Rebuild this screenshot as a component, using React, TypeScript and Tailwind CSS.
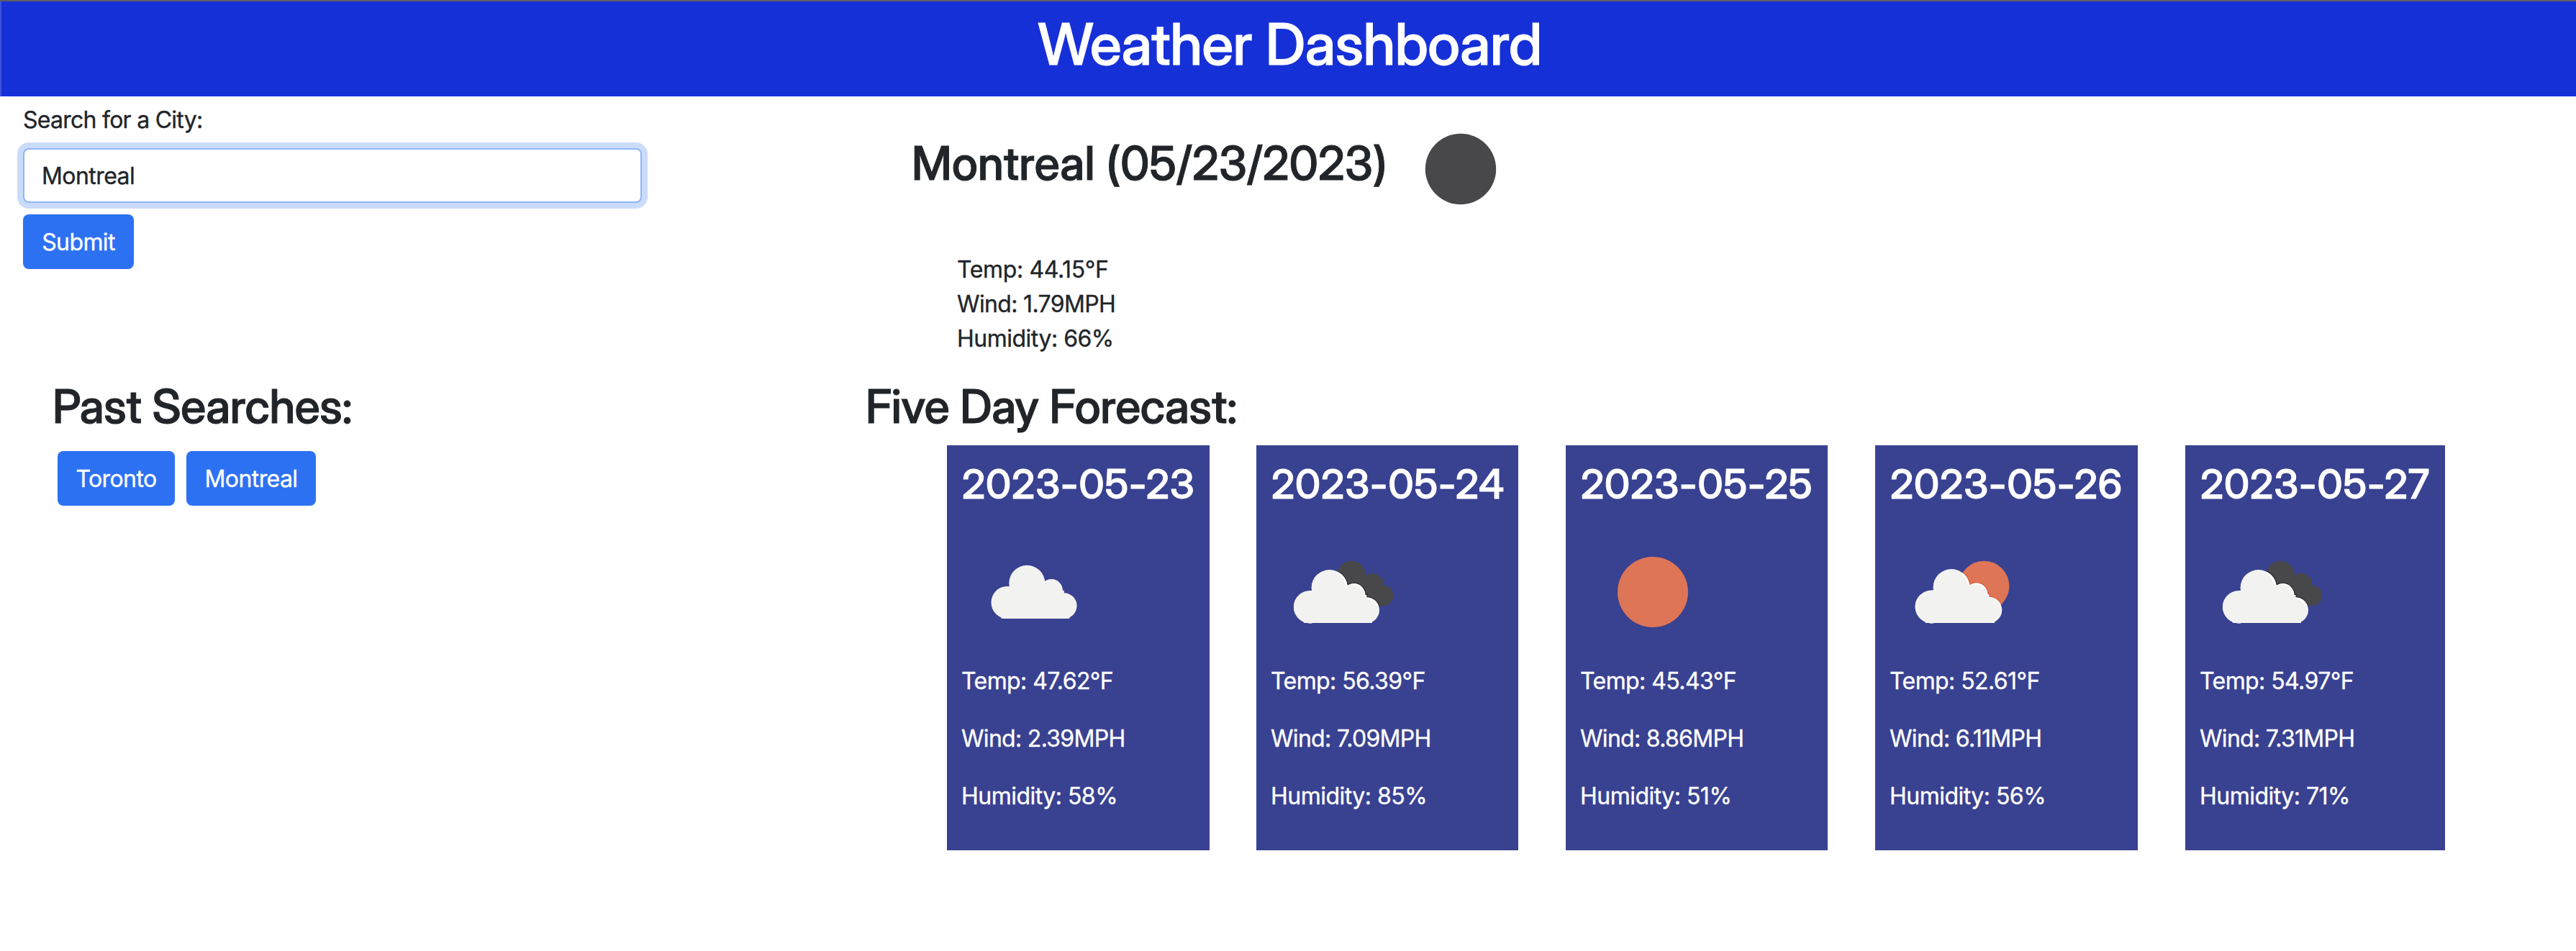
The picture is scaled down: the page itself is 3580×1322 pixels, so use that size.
type IconKind = "night" | "sun" | "cloud" | "clouds" | "partly";

const CLOUD = (
  <>
    <circle cx="54.5" cy="120.7" r="22.6" />
    <circle cx="81.7" cy="94" r="25" />
    <circle cx="115.6" cy="104" r="15.7" />
    <circle cx="133.2" cy="125.3" r="17.8" />
    <rect x="54.5" y="104" width="78.7" height="39" />
    <rect x="46" y="138" width="95" height="5" />
  </>
);

const DARK_CLOUD = (
  <>
    <circle cx="112.3" cy="76.8" r="20" />
    <circle cx="141.4" cy="86.3" r="12.6" />
    <circle cx="155.8" cy="104.8" r="14.5" />
    <rect x="100" y="80" width="55.8" height="39.3" />
  </>
);

function WeatherIcon({ kind, id }: { kind: IconKind; id: string }) {
  return (
    <svg viewBox="0 0 200 200" className="block h-[200px] w-[200px] shrink-0">
      {kind === "night" && <circle cx="100" cy="100" r="49.2" fill="#48484a" />}
      {kind === "sun" && <circle cx="101" cy="100" r="49" fill="#dd7556" />}
      {kind === "cloud" && (
        <g fill="#f2f2f0" transform="translate(9.6 -6.2)">
          {CLOUD}
        </g>
      )}
      {kind === "clouds" && (
        <>
          <defs>
            <clipPath id={`${id}-back`}>{DARK_CLOUD}</clipPath>
            <clipPath id={`${id}-front`}>{CLOUD}</clipPath>
          </defs>
          <g fill="#48484a">{DARK_CLOUD}</g>
          <g clipPath={`url(#${id}-back)`}>
            <g fill="#303032" stroke="#303032" strokeWidth="3">
              {CLOUD}
            </g>
          </g>
          <g fill="#f2f2f0">{CLOUD}</g>
          <g clipPath={`url(#${id}-front)`}>
            <g fill="#ffffff">{DARK_CLOUD}</g>
            <g fill="#f2f2f0" transform="translate(-2 1.6)">
              {CLOUD}
            </g>
          </g>
        </>
      )}
      {kind === "partly" && (
        <>
          <defs>
            <clipPath id={`${id}-back`}>
              <circle cx="131.3" cy="91.7" r="35" />
            </clipPath>
            <clipPath id={`${id}-front`}>{CLOUD}</clipPath>
          </defs>
          <circle cx="131.3" cy="91.7" r="35" fill="#dd7556" />
          <g clipPath={`url(#${id}-back)`}>
            <g
              fill="#dd6440"
              stroke="#dd6440"
              strokeWidth="3"
              transform="translate(3.3 -1.9) scale(1.013)"
            >
              {CLOUD}
            </g>
          </g>
          <g transform="translate(3.3 -1.9) scale(1.013)">
            <g fill="#f2f2f0">{CLOUD}</g>
            <g clipPath={`url(#${id}-front)`}>
              <circle cx="126.4" cy="92.4" r="34.6" fill="#f8fdff" />
              <g fill="#f2f2f0" transform="translate(-2 1.6)">
                {CLOUD}
              </g>
            </g>
          </g>
        </>
      )}
    </svg>
  );
}

const FORECAST: {
  date: string;
  icon: IconKind;
  temp: string;
  wind: string;
  humidity: string;
  size: string;
}[] = [
  { date: "2023-05-23", icon: "cloud", temp: "47.62", wind: "2.39", humidity: "58", size: "w-[365px] mr-[65px]" },
  { date: "2023-05-24", icon: "clouds", temp: "56.39", wind: "7.09", humidity: "85", size: "w-[364px] mr-[66px]" },
  { date: "2023-05-25", icon: "sun", temp: "45.43", wind: "8.86", humidity: "51", size: "w-[364px] mr-[66px]" },
  { date: "2023-05-26", icon: "partly", temp: "52.61", wind: "6.11", humidity: "56", size: "w-[365px] mr-[66px]" },
  { date: "2023-05-27", icon: "clouds", temp: "54.97", wind: "7.31", humidity: "71", size: "w-[361px]" },
];

const BUTTON =
  "flex h-[76px] items-center justify-center rounded-[8px] bg-[#2d71f3] pt-0.5 leading-[48px] text-white tracking-[-0.6px]";

const DISPLAY = "font-['Inter_Display','Inter',sans-serif] font-medium whitespace-nowrap [-webkit-text-stroke:1px_currentColor]";

const HEADING = `${DISPLAY} text-[64px] leading-[76.8px]`;

export default function App() {
  return (
    <div className="h-[1322px] w-[3580px] overflow-hidden border-t-2 border-[#5f5f60] bg-white font-['Inter',sans-serif] text-[32px] leading-[48px] text-[#212529] [-webkit-text-stroke:0.35px_currentColor]">
      <header className="h-[132px] border-l-2 border-[#3d53dd] bg-[#1630d8] pl-[3px] pt-[11px]">
        <h1 className={`${DISPLAY} text-center text-[80px] leading-[96px] tracking-[-0.48px] text-white`}>
          Weather Dashboard
        </h1>
      </header>

      <section className="flex h-[393px]">
        <form className="w-[1267px] pl-8 pt-[9px]" onSubmit={(e) => e.preventDefault()}>
          <label htmlFor="city" className="block tracking-[-0.74px]">
            Search for a City:
          </label>
          <input
            id="city"
            type="text"
            defaultValue="Montreal"
            className="mt-[15px] block h-[76px] w-[860px] rounded-[8px] border-2 border-[#8fb6f9] bg-white px-6 pt-px tracking-[-0.56px] outline-none ring-8 ring-[#cbdbfb]"
          />
          <button type="submit" className={`${BUTTON} mt-4 w-[154px]`}>
            Submit
          </button>
        </form>

        <div>
          <div className="flex h-[217px] items-start pt-px">
            <h2 className={`${HEADING} mt-[54px] w-[663px] tracking-[0.24px]`}>Montreal (05/23/2023)</h2>
            <WeatherIcon kind="night" id="today" />
          </div>
          <ul className="pl-[63px]">
            <li className="tracking-[-0.37px]">Temp: 44.15°F</li>
            <li className="tracking-[-0.65px]">Wind: 1.79MPH</li>
            <li className="tracking-[-0.5px]">Humidity: 66%</li>
          </ul>
        </div>
      </section>

      <section className="flex">
        <div className="w-[1203px] pl-[73px]">
          <h2 className={`${HEADING} tracking-[-0.35px]`}>Past Searches:</h2>
          <div className="mt-[23px] flex gap-4 pl-[7px]">
            <button className={`${BUTTON} w-[163px]`}>Toronto</button>
            <button className={`${BUTTON} w-[180px]`}>Montreal</button>
          </div>
        </div>

        <div>
          <h2 className={`${HEADING} tracking-[-0.3px]`}>Five Day Forecast:</h2>
          <div className="mt-[15px] flex pl-[113px]">
            {FORECAST.map((day) => (
              <article key={day.date} className={`${day.size} h-[563px] shrink-0 bg-[#394191] px-5 pt-[21px] text-white`}>
                <h3 className={`${DISPLAY} pl-px text-[56px] leading-[67.2px] tracking-[0.98px]`}>{day.date}</h3>
                <div className="mt-4">
                  <WeatherIcon kind={day.icon} id={day.date} />
                </div>
                <div className="flex flex-col gap-8">
                  <p className="tracking-[-0.58px]">Temp: {day.temp}°F</p>
                  <p className="tracking-[-0.7px]">Wind: {day.wind}MPH</p>
                  <p className="tracking-[-0.52px]">Humidity: {day.humidity}%</p>
                </div>
              </article>
            ))}
          </div>
        </div>
      </section>
    </div>
  );
}
